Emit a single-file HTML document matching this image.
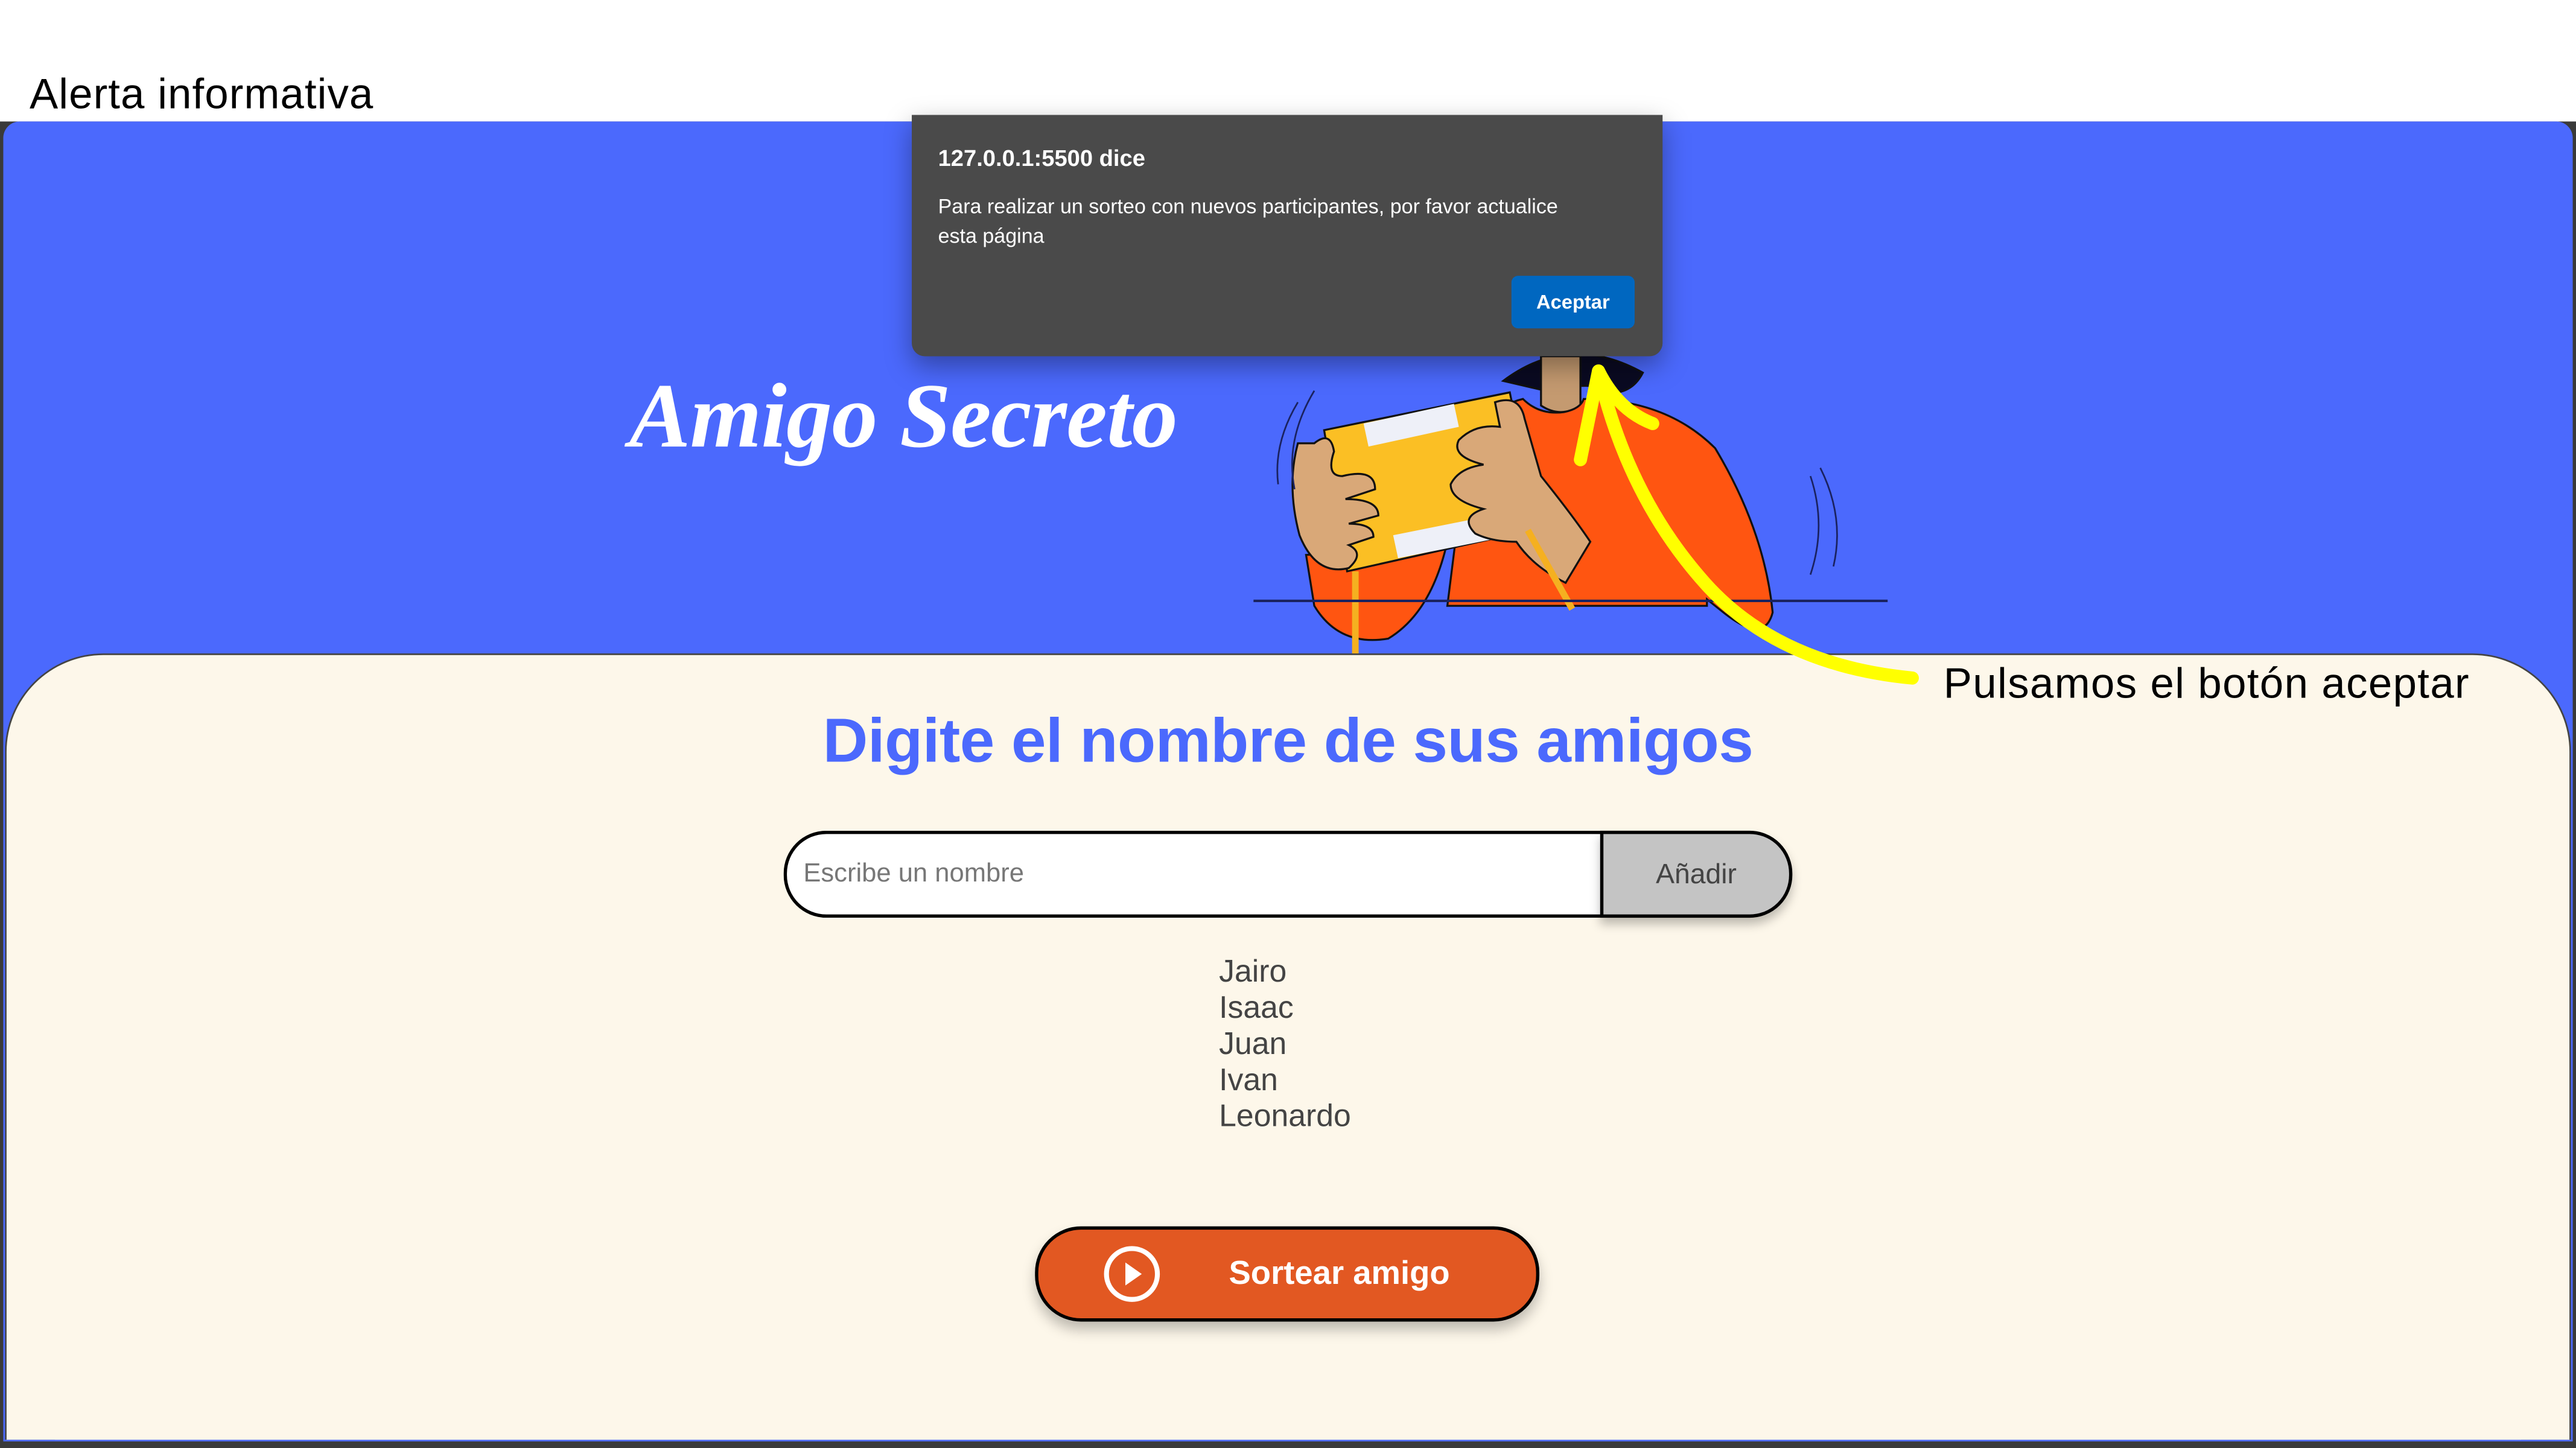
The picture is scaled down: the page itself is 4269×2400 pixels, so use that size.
<!DOCTYPE html>
<html><head><meta charset="utf-8">
<style>
html,body{margin:0;padding:0;background:#fff;overflow:hidden;width:4269px;height:2400px}
#w{position:absolute;left:0;top:0;width:1568px;height:882px;transform:scale(2.72258,2.7211);transform-origin:0 0;background:#fff;font-family:"Liberation Sans",sans-serif}
.a{position:absolute}
</style></head><body><div id="w">
<div class="a" style="left:18px;top:42px;font-size:26px;color:#000;font-weight:300;letter-spacing:0.4px">Alerta informativa</div>
<!-- frame -->
<div class="a" style="left:0;top:74px;width:1568px;height:808px;background:#3a3a3a"></div>
<div class="a" style="left:2px;top:74px;width:1564px;height:804px;background:#4b69fd;border-radius:10px 10px 0 0"></div>
<div class="a" style="left:383px;top:222px;font-family:'Liberation Serif',serif;font-style:italic;font-weight:bold;font-size:56px;color:#fff;letter-spacing:-0.3px">Amigo Secreto</div>
<svg class="a" style="left:0;top:0" width="1568" height="882" viewBox="0 0 1568 882">
<g stroke="#111" stroke-width="1.2">
<path d="M915 232 q40 -30 85 -5 q-5 10 -15 12 q-20 -8 -40 0 z" fill="#0a0a22"/>
<path d="M938 217 h24 v30 q-12 8 -24 0 z" fill="#c49a70"/>
<path d="M927 243 q10 10 25 8 q10 -2 12 -8 q50 0 80 30 q30 50 35 100 q-5 20 -30 0 l-10 -8 v4 H881 l10 -80 q10 -40 36 -46 z" fill="#ff5511"/>
<path d="M795 338 l85 -4 q-10 40 -35 55 q-30 5 -45 -20 z" fill="#ff5511"/>
<path d="M806 262 L919 239 L936 322 L820 348 Z" fill="#fbbf24"/>
<path d="M830 258 l55 -12 l3 14 l-55 12z M848 326 l60 -12 l3 14 l-60 12z" fill="#eef0f8" stroke="none"/>
<path d="M800 270 q10 -8 12 5 q-5 15 5 15 q20 -5 20 8 l-18 6 q20 0 20 10 l-18 5 q15 0 15 8 l-15 5 q10 5 0 14 q-20 5 -30 -20 q-8 -30 -1 -56 z" fill="#d9a878"/>
<path d="M910 245 q15 -5 18 10 l10 35 q20 25 30 40 l-15 25 q-20 -10 -30 -25 q-15 0 -25 -5 q-10 -10 5 -15 q-20 -5 -20 -15 q5 -10 20 -12 q-20 -5 -15 -15 q10 -10 25 -8 z" fill="#d9a878"/>
</g>
<path d="M825 348 V398 M930 323 L957 371" stroke="#f5b020" stroke-width="4"/>
<path d="M763 366 H1149" stroke="#1a2260" stroke-width="1.5"/>
<path d="M790 245 q-15 25 -12 50 M800 238 q-18 30 -12 60 M1102 290 q10 30 0 60 M1108 285 q15 30 8 60" stroke="#1a2260" stroke-width="1" fill="none"/>
</svg>
<!-- beige -->
<div class="a" style="left:3px;top:398px;width:1560px;height:478px;background:#fdf7ea;border:1px solid #444;border-bottom:none;border-radius:60px 60px 0 0"></div>
<div class="a" style="left:0;top:431px;width:1568px;text-align:center;font-size:38px;font-weight:bold;color:#4b69fd;letter-spacing:-0.2px">Digite el nombre de sus amigos</div>
<div class="a" style="left:477px;top:506px;width:496px;height:49px;background:#fff;border:2px solid #000;border-right:none;border-radius:26px 0 0 26px"></div>
<div class="a" style="left:489px;top:524px;font-size:16px;color:#777">Escribe un nombre</div>
<div class="a" style="left:974px;top:506px;width:113px;height:49px;background:#c4c4c4;border:2px solid #000;border-radius:0 26px 26px 0;box-shadow:0 4px 6px rgba(0,0,0,.25);text-align:center;line-height:49px;font-size:17px;color:#444">Añadir</div>
<div class="a" style="left:742px;top:582px;font-size:19px;line-height:22px;color:#444">Jairo<br>Isaac<br>Juan<br>Ivan<br>Leonardo</div>
<div class="a" style="left:630px;top:747px;width:303px;height:54px;background:#e25822;border:2px solid #000;border-radius:28px;box-shadow:0 5px 8px rgba(0,0,0,.25)"></div>
<svg class="a" style="left:670px;top:757px" width="40" height="40" viewBox="0 0 40 40"><circle cx="19" cy="19" r="15.5" fill="none" stroke="#fff" stroke-width="3"/><path d="M15 12 L25 19 L15 26Z" fill="#fff"/></svg>
<div class="a" style="left:748px;top:765px;font-size:20px;font-weight:bold;color:#fff">Sortear amigo</div>
<!-- dialog -->
<div class="a" style="left:555px;top:70px;width:457px;height:147px;background:#4a4a4a;border-radius:0 0 8px 8px;box-shadow:0 6px 16px rgba(0,0,0,.35)"></div>
<div class="a" style="left:571px;top:88px;font-size:14px;font-weight:bold;color:#fff">127.0.0.1:5500 dice</div>
<div class="a" style="left:571px;top:117px;width:400px;font-size:12.5px;line-height:18px;color:#fff">Para realizar un sorteo con nuevos participantes, por favor actualice esta página</div>
<div class="a" style="left:920px;top:168px;width:75px;height:32px;background:#0067c0;border-radius:4px;color:#fff;font-size:12px;font-weight:bold;text-align:center;line-height:32px">Aceptar</div>
<!-- arrow -->
<svg class="a" style="left:0;top:0" width="1568" height="882" viewBox="0 0 1568 882">
<path d="M1164 413 Q1080 405 1035 352 Q990 300 973 226" stroke="#ffff00" stroke-width="8" fill="none" stroke-linecap="round"/>
<path d="M962 280 L973 226 Q985 250 1006 258" stroke="#ffff00" stroke-width="8" fill="none" stroke-linecap="round" stroke-linejoin="round"/>
</svg>
<div class="a" style="left:1183px;top:401px;font-size:26px;font-weight:300;color:#000;letter-spacing:0.5px">Pulsamos el botón aceptar</div>
</div></body></html>
